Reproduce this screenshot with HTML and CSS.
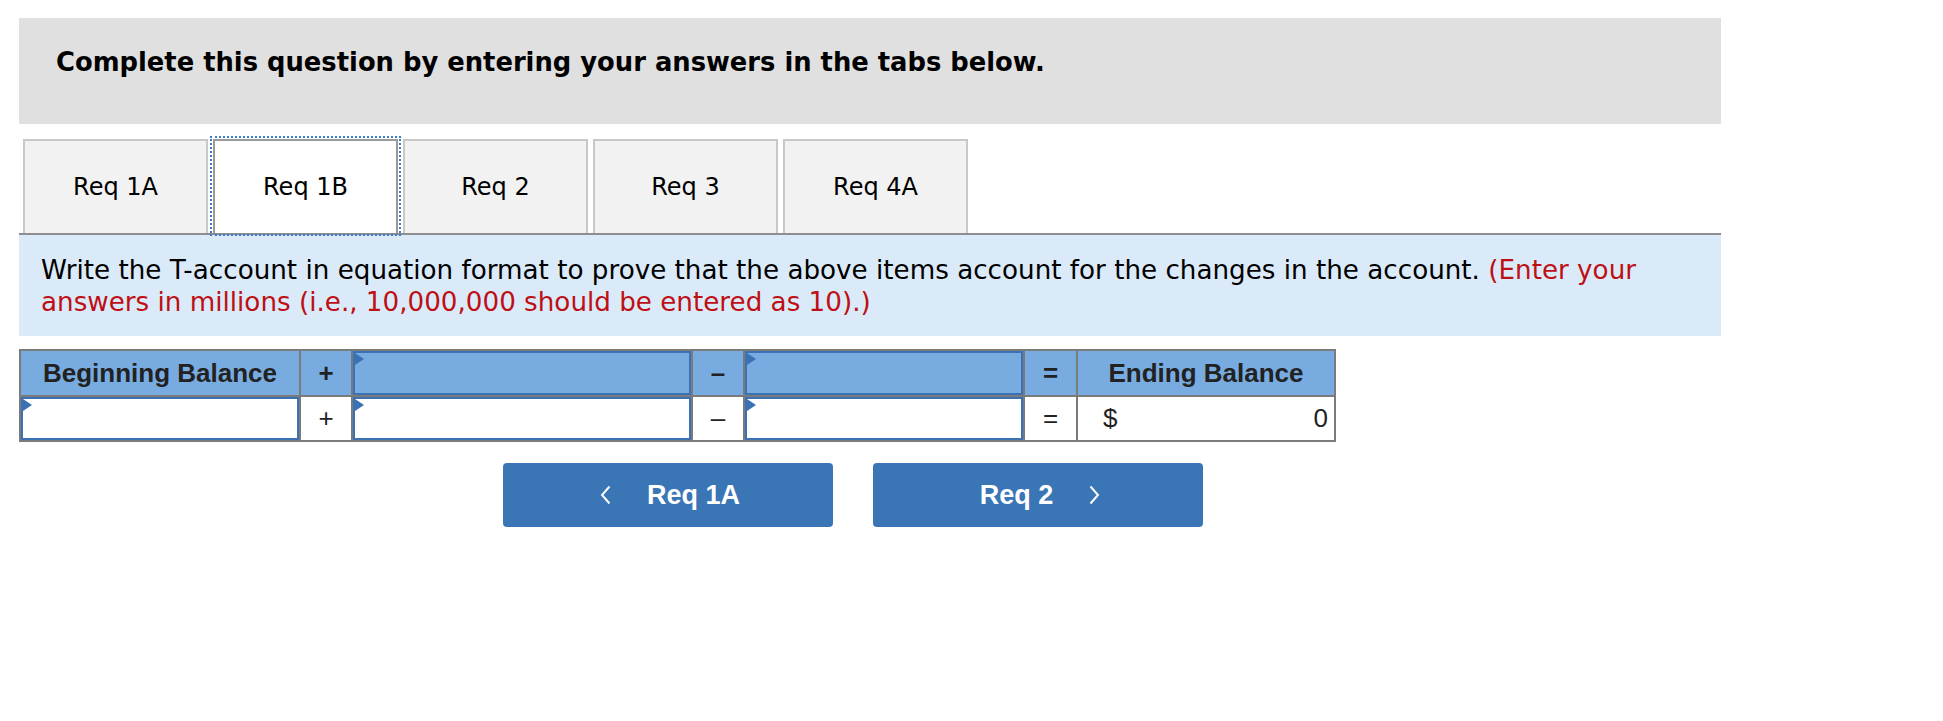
FILE: index.html
```html
<!DOCTYPE html>
<html lang="en">
<head>
<meta charset="utf-8">
<title>Req 1B</title>
<link rel="stylesheet" href="styles.css">
</head>
<body>
<div class="page">
  <div class="prompt">
    <h2 class="prompt-title">Complete this question by entering your answers in the tabs below.</h2>
  </div>

  <div class="tabs">
    <div class="tab">Req 1A</div>
    <div class="tab tab-active">Req 1B</div>
    <div class="tab">Req 2</div>
    <div class="tab">Req 3</div>
    <div class="tab">Req 4A</div>
  </div>

  <div class="instructions">
    <p class="instructions-text">Write the T-account in equation format to prove that the above items account for the changes in the account. <span class="note">(Enter your</span> <span class="note">answers in millions (i.e., 10,000,000 should be entered as 10).)</span></p>
  </div>

  <div class="taccount">
    <div class="cell head label">Beginning Balance</div>
    <div class="cell head op">+</div>
    <div class="cell head input"></div>
    <div class="cell head op">&ndash;</div>
    <div class="cell head input"></div>
    <div class="cell head op">=</div>
    <div class="cell head label">Ending Balance</div>

    <div class="cell body input"></div>
    <div class="cell body op">+</div>
    <div class="cell body input"></div>
    <div class="cell body op">&ndash;</div>
    <div class="cell body input"></div>
    <div class="cell body op">=</div>
    <div class="cell body total"><span>$</span><span>0</span></div>
  </div>

  <div class="nav">
    <button class="nav-btn" type="button">
      <svg class="chev" width="11" height="20" viewBox="0 0 11 20"><polyline points="9.5,1.5 2,10 9.5,18.5" fill="none" stroke="#fff" stroke-width="2"/></svg>
      <span>Req 1A</span>
    </button>
    <button class="nav-btn" type="button">
      <span>Req 2</span>
      <svg class="chev" width="11" height="20" viewBox="0 0 11 20"><polyline points="1.5,1.5 9,10 1.5,18.5" fill="none" stroke="#fff" stroke-width="2"/></svg>
    </button>
  </div>
</div>
</body>
</html>
```

FILE: styles.css
```css
html, body {
  margin: 0;
  padding: 0;
  background: #ffffff;
}

.page {
  padding: 18px 0 0 19px;
  width: 1702px;
  font-family: "DejaVu Sans", Verdana, sans-serif;
  color: #000;
}

.prompt {
  background: #e0e0e0;
  height: 106px;
  box-sizing: border-box;
  padding: 26px 0 0 37px;
}

.prompt-title {
  margin: 0;
  font-size: 25.8px;
  font-weight: bold;
  line-height: 36px;
  color: #000;
}

.tabs {
  display: flex;
  gap: 5px;
  margin-top: 15px;
  padding-left: 4px;
  border-bottom: 2px solid #8e8e8e;
}

.tab {
  width: 185px;
  height: 94px;
  box-sizing: border-box;
  border: 2px solid #c8c8c8;
  border-bottom: none;
  background: #f2f2f2;
  display: flex;
  align-items: center;
  justify-content: center;
  font-size: 24px;
  color: #000;
}

.tab-active {
  background: #ffffff;
  border-color: #9a9a9a;
  outline: 2px dotted #3a7cc9;
  outline-offset: 1px;
}

.instructions {
  background: #dbeaf8;
  padding: 19px 60px 18px 22px;
  height: 101px;
  box-sizing: border-box;
}

.instructions-text {
  margin: 0;
  font-size: 26.2px;
  line-height: 32px;
}

.note {
  color: #bd0f14;
}

.taccount {
  margin-top: 13px;
  display: grid;
  grid-template-columns: 278px 50px 338px 50px 278px 51px 256px;
  grid-template-rows: 44px 43px;
  gap: 2px;
  padding: 2px;
  background: #7b7b7b;
  width: max-content;
  font-family: "Liberation Sans", Arial, sans-serif;
  color: #222;
}

.cell {
  display: flex;
  align-items: center;
  justify-content: center;
  font-size: 26px;
  box-sizing: border-box;
}

.head {
  background: #78ace1;
  font-weight: bold;
}

.body {
  background: #ffffff;
}

.input {
  position: relative;
  border: 2px solid #3b72b6;
}

.input::before {
  content: "";
  position: absolute;
  top: 0;
  left: 0;
  width: 0;
  height: 0;
  border-left: 9px solid #3b72b6;
  border-top: 6px solid transparent;
  border-bottom: 6px solid transparent;
}

.total {
  justify-content: space-between;
  padding: 0 6px 0 25px;
}

.nav {
  display: flex;
  gap: 40px;
  margin-top: 21px;
  padding-left: 484px;
}

.nav-btn {
  width: 330px;
  height: 64px;
  border: none;
  border-radius: 4px;
  background: #3a75b6;
  color: #ffffff;
  font-family: "Liberation Sans", Arial, sans-serif;
  font-weight: bold;
  font-size: 27px;
  display: flex;
  align-items: center;
  justify-content: center;
  gap: 36px;
  padding: 0 0 0 4px;
}

.chev {
  display: block;
}
```
